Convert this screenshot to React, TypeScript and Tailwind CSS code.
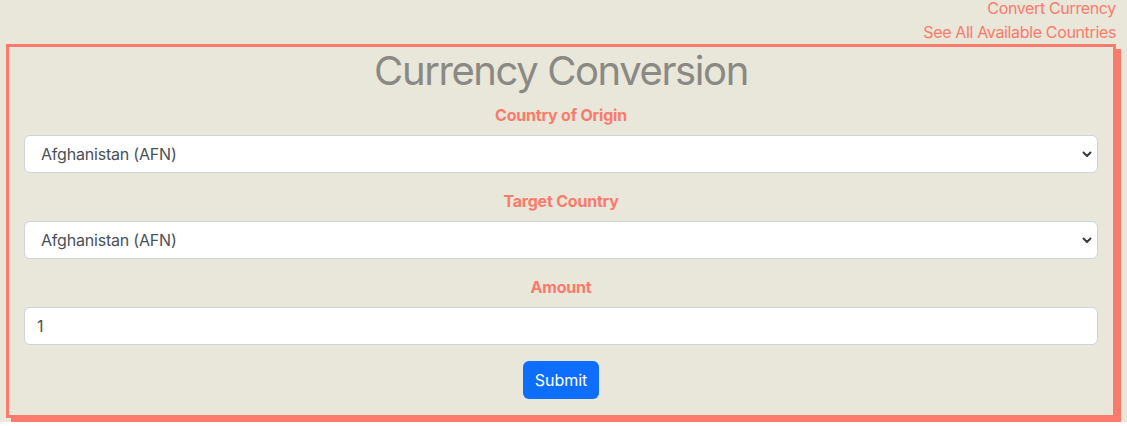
import { ChangeEvent, useState } from "react";

const COUNTRIES = ["Afghanistan (AFN)", "Albania (ALL)", "Algeria (DZD)", "Angola (AOA)", "Argentina (ARS)"];

function Chevron() {
  return (
    <svg className="pointer-events-none absolute right-[5px] top-1/2 -translate-y-1/2" width="12" height="12" viewBox="0 0 12 12" fill="none">
      <path d="M2.5 4.5l3.5 3.5 3.5-3.5" stroke="#343a40" strokeWidth="2" strokeLinecap="round" strokeLinejoin="round" />
    </svg>
  );
}

function CountrySelect({ value, onChange }: { value: string; onChange: (e: ChangeEvent<HTMLSelectElement>) => void }) {
  return (
    <div className="relative mt-2">
      <select
        value={value}
        onChange={onChange}
        className="h-[38px] w-full appearance-none rounded-[6px] border border-[#ced4da] bg-white pl-4 pr-8 text-base tracking-[-0.2px] text-[#495057] outline-none"
      >
        {COUNTRIES.map((c) => (
          <option key={c}>{c}</option>
        ))}
      </select>
      <Chevron />
    </div>
  );
}

export default function App() {
  const [origin, setOrigin] = useState(COUNTRIES[0]);
  const [target, setTarget] = useState(COUNTRIES[0]);
  const [amount, setAmount] = useState("1");

  return (
    <div className="min-h-[426px] bg-[#e9e6da] px-[6px] font-['Inter',sans-serif] text-base leading-6">
      <div className="-mt-1 flex flex-col items-end pr-[5px] tracking-[-0.35px] text-[#fa7b6c]">
        <a href="#">Convert Currency</a>
        <a href="#">See All Available Countries</a>
      </div>
      <form
        onSubmit={(e) => e.preventDefault()}
        className="mr-[5px] border-[3px] border-[#fa7b6c] px-[15px] pb-[16px] text-center shadow-[5px_5px_0_#fa7b6c]"
      >
        <h1 className="mb-2 text-[40px] leading-[48px] tracking-[-1.4px] text-[#8a8984]">Currency Conversion</h1>
        <label className="block font-bold tracking-[-0.2px] text-[#fa7b6c]">Country of Origin</label>
        <CountrySelect value={origin} onChange={(e) => setOrigin(e.target.value)} />
        <label className="mt-4 block font-bold tracking-[-0.2px] text-[#fa7b6c]">Target Country</label>
        <CountrySelect value={target} onChange={(e) => setTarget(e.target.value)} />
        <label className="mt-4 block font-bold tracking-[-0.2px] text-[#fa7b6c]">Amount</label>
        <input
          value={amount}
          onChange={(e) => setAmount(e.target.value)}
          className="mt-2 h-[38px] w-full rounded-[6px] border border-[#ced4da] bg-white px-3 text-left text-base text-[#495057] outline-none"
        />
        <button type="submit" className="mt-4 h-[38px] rounded-[6px] bg-[#0d6efd] px-3 text-white">
          Submit
        </button>
      </form>
    </div>
  );
}
